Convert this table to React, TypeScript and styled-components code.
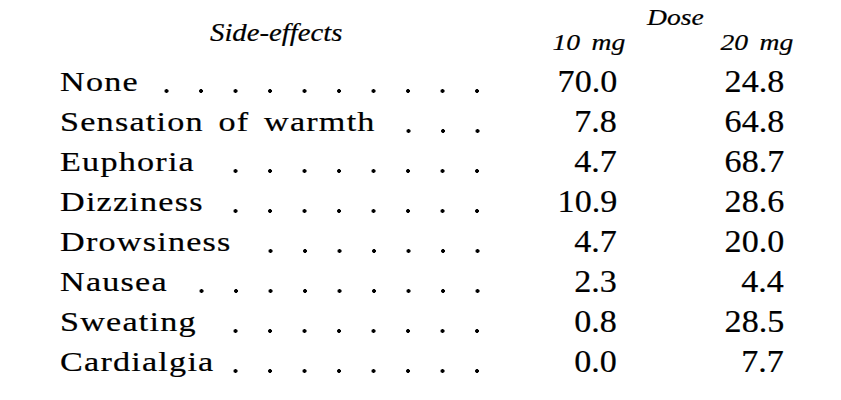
import React from "react";
import styled, { createGlobalStyle, css } from "styled-components";

const GlobalStyle = createGlobalStyle`
  html, body {
    margin: 0;
    padding: 0;
    background: #ffffff;
  }
`;

// the scan is a little wider than plain Times, so text gets stretched
const type = css<{ $origin?: "left" | "right" }>`
  font-family: "Liberation Serif", "Times New Roman", serif;
  color: #000;
  -webkit-text-stroke: 0.2px #000;
  display: inline-block;
  transform: scaleX(1.15);
  transform-origin: ${(p) => p.$origin || "left"} center;
`;

type Entry = { label: string; dots: number; low: string; high: string };

const rows: Entry[] = [
  { label: "None", dots: 10, low: "70.0", high: "24.8" },
  { label: "Sensation of warmth", dots: 3, low: "7.8", high: "64.8" },
  { label: "Euphoria", dots: 8, low: "4.7", high: "68.7" },
  { label: "Dizziness", dots: 8, low: "10.9", high: "28.6" },
  { label: "Drowsiness", dots: 7, low: "4.7", high: "20.0" },
  { label: "Nausea", dots: 9, low: "2.3", high: "4.4" },
  { label: "Sweating", dots: 8, low: "0.8", high: "28.5" },
  { label: "Cardialgia", dots: 8, low: "0.0", high: "7.7" },
];

const DOT_STEP = 34.5;

const Page = styled.div`
  width: 841px;
  height: 400px;
  overflow: hidden;
  padding-left: 60px;
  box-sizing: border-box;
  background: #fff;
`;

const Header = styled.div`
  display: flex;
  height: 62px;
`;

const SideCell = styled.div`
  width: 420px;
  padding: 20px 0 0 150px;
  box-sizing: border-box;
`;

const SideHead = styled.span`
  ${type};
  font-style: italic;
  font-size: 25px;
  line-height: 25px;
`;

const DoseBlock = styled.div`
  display: flex;
  flex-direction: column;
  padding-top: 5px;
`;

const DoseRow = styled.div`
  padding-left: 167px;
  height: 25px;
`;

const DoseTitle = styled.span`
  ${type};
  font-style: italic;
  font-size: 24px;
  line-height: 25px;
`;

const Units = styled.div`
  display: grid;
  grid-template-columns: 145px 168px;
  justify-items: end;
`;

const Unit = styled.span`
  ${type};
  font-style: italic;
  font-size: 24px;
  line-height: 25px;
  word-spacing: 4px;
`;

const Row = styled.div`
  display: flex;
  align-items: baseline;
  height: 40px;
  line-height: 40px;
`;

const Label = styled.div`
  width: 420px;
  display: flex;
  align-self: stretch;
  align-items: baseline;
`;

const LabelText = styled.span`
  ${type};
  transform: scaleX(1.22);
  font-size: 28px;
  line-height: 40px;
  letter-spacing: 1px;
  word-spacing: 4px;
`;

const Leader = styled.span<{ $count: number }>`
  margin-left: auto;
  align-self: stretch;
  width: ${(p) => p.$count * DOT_STEP}px;
  background-image: radial-gradient(circle at 31.5px 2px, #000 1.6px, transparent 2.2px);
  background-size: ${DOT_STEP}px 4px;
  background-repeat: repeat-x;
  background-position: left 0 top 27px;
`;

const NumCell = styled.div<{ $w: number }>`
  width: ${(p) => p.$w}px;
  text-align: right;
`;

const Num = styled.span`
  ${type};
  transform: scaleX(1.1);
  font-size: 31px;
  line-height: 40px;
`;

export default function App() {
  return (
    <>
      <GlobalStyle />
      <Page>
        <Header>
          <SideCell>
            <SideHead>Side-effects</SideHead>
          </SideCell>
          <DoseBlock>
            <DoseRow>
              <DoseTitle>Dose</DoseTitle>
            </DoseRow>
            <Units>
              <Unit $origin="right">10 mg</Unit>
              <Unit $origin="right">20 mg</Unit>
            </Units>
          </DoseBlock>
        </Header>
        {rows.map((r) => (
          <Row key={r.label}>
            <Label>
              <LabelText>{r.label}</LabelText>
              <Leader $count={r.dots} />
            </Label>
            <NumCell $w={137}>
              <Num $origin="right">{r.low}</Num>
            </NumCell>
            <NumCell $w={167}>
              <Num $origin="right">{r.high}</Num>
            </NumCell>
          </Row>
        ))}
      </Page>
    </>
  );
}
